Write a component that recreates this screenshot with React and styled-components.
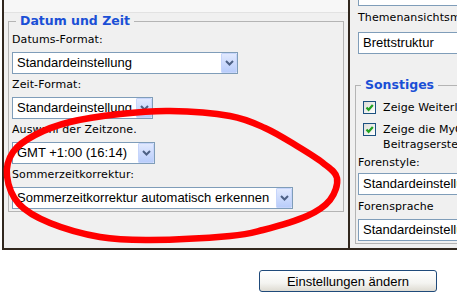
import styled, { createGlobalStyle } from "styled-components";

const GlobalStyle = createGlobalStyle`
  html, body {
    margin: 0;
    padding: 0;
    background: #fff;
    overflow: hidden;
  }
`;

const Stage = styled.div`
  position: relative;
  width: 457px;
  height: 302px;
  overflow: hidden;
  font-family: "DejaVu Sans", Verdana, sans-serif;
`;

const SettingsTable = styled.div`
  display: flex;
  align-items: stretch;
  width: 692px;
  margin: -59px 0 0 2px;
`;

const LeftCell = styled.div`
  width: 346px;
  flex: none;
  box-sizing: border-box;
  display: flex;
  flex-direction: column;
  background: #f0f0f0;
  border-left: 2px solid #31271e;
  border-bottom: 2px solid #31271e;
`;

const TopBand = styled.div`
  height: 72px;
  box-sizing: border-box;
  background: #f7f7f7;
  border-bottom: 1px solid #e2e2e2;
`;

const CellBody = styled.div`
  padding: 0 4px;
`;

const RightCell = styled.div`
  flex: 1;
  box-sizing: border-box;
  background: #f0f0f0;
  border-left: 2px solid #31271e;
  border-bottom: 2px solid #31271e;
  padding: 4px 0 4px 5px;
`;

const Group = styled.fieldset`
  width: ${(p) => p.$w}px;
  box-sizing: border-box;
  margin: 0 0 ${(p) => p.$mb || 0}px 0;
  padding: 0 ${(p) => p.$px}px 2px;
  border: 1px solid ${(p) => (p.$bare ? "transparent" : "#b4b4b4")};
  min-inline-size: 0;
`;

const GroupTitle = styled.legend`
  margin-left: ${(p) => p.$ml}px;
  padding: 0 4px;
  font-family: "DejaVu Sans", Verdana, sans-serif;
  font-weight: bold;
  font-size: 12.5px;
  line-height: 16px;
  color: #1a4fd6;
  visibility: ${(p) => (p.$hidden ? "hidden" : "visible")};
`;

const Label = styled.div`
  margin: ${(p) => p.$mt ?? 3}px 0 ${(p) => p.$mb ?? 4}px;
  font-size: 11px;
  line-height: 16px;
  letter-spacing: 0.1px;
  color: #000;
  white-space: nowrap;
`;

const SelectBox = styled.div`
  width: ${(p) => p.$w}px;
  height: 22px;
  box-sizing: border-box;
  display: flex;
  background: #fff;
  border: 1px solid #7f9db9;
`;

const SelectText = styled.span`
  flex: 1;
  padding-left: 4px;
  font-family: "Liberation Sans", Arial, sans-serif;
  font-size: 13px;
  line-height: 20px;
  color: #000;
  white-space: nowrap;
  overflow: hidden;
`;

const DropButton = styled.span`
  width: 16px;
  flex: none;
  box-sizing: border-box;
  display: flex;
  align-items: center;
  justify-content: center;
  border: 1px solid #c6d5fb;
  border-radius: 1px;
  background: linear-gradient(#e1e9fe, #b9cdfb);
`;

const CheckRow = styled.div`
  display: flex;
  align-items: flex-start;
  margin-top: 7px;
  font-size: 11px;
  line-height: 15px;
  letter-spacing: 0.1px;
  white-space: nowrap;
`;

const CheckBox = styled.span`
  width: 13px;
  height: 13px;
  flex: none;
  box-sizing: border-box;
  margin: 1px 7px 0 5px;
  display: flex;
  align-items: center;
  justify-content: center;
  border: 1px solid #1c5180;
  background: linear-gradient(135deg, #dcdcd7, #fff);
`;

const Footer = styled.div`
  width: 692px;
  margin-left: 2px;
  padding-top: 20px;
  display: flex;
  justify-content: center;
`;

const SubmitButton = styled.button`
  width: 178px;
  height: 22px;
  padding: 0;
  border: 1px solid #1f4a7a;
  border-radius: 3px;
  background: linear-gradient(#ffffff, #f4f4f1 60%, #dedbd2);
  font-family: "Liberation Sans", Arial, sans-serif;
  font-size: 13px;
  color: #000;
`;

const Scribble = styled.svg`
  position: absolute;
  top: 0;
  left: 0;
  pointer-events: none;
`;

const Chevron = () => (
  <svg width="9" height="6" viewBox="0 0 9 6">
    <path d="M1 1 L4.5 4.5 L8 1" fill="none" stroke="#4d6185" strokeWidth="2" />
  </svg>
);

const Tick = () => (
  <svg width="11" height="11" viewBox="0 0 11 11">
    <path d="M2.5 5.5 L4.6 7.8 L8.8 3" fill="none" stroke="#21a121" strokeWidth="2.2" />
  </svg>
);

const Select = ({ w, children, arrow = true }) => (
  <SelectBox $w={w}>
    <SelectText>{children}</SelectText>
    {arrow && (
      <DropButton>
        <Chevron />
      </DropButton>
    )}
  </SelectBox>
);

// hand drawn red ring, smoothed through a few points
const ring = [
  [7, 176], [13, 152], [35, 135], [70, 122], [120, 114], [170, 111],
  [230, 116], [265, 128], [297, 146], [323, 163], [337, 178], [330, 200],
  [307, 216], [263, 230], [230, 236], [150, 240], [100, 237], [50, 223], [19, 204],
];

const smoothPath = (pts) => {
  const n = pts.length;
  let d = `M${pts[0][0]},${pts[0][1]}`;
  for (let i = 0; i < n; i++) {
    const p0 = pts[(i - 1 + n) % n];
    const p1 = pts[i];
    const p2 = pts[(i + 1) % n];
    const p3 = pts[(i + 2) % n];
    const c1 = [p1[0] + (p2[0] - p0[0]) / 6, p1[1] + (p2[1] - p0[1]) / 6];
    const c2 = [p2[0] - (p3[0] - p1[0]) / 6, p2[1] - (p3[1] - p1[1]) / 6];
    d += ` C${c1} ${c2} ${p2}`;
  }
  return d + "Z";
};

export default function App() {
  return (
    <Stage>
      <GlobalStyle />
      <SettingsTable>
        <LeftCell>
          <TopBand />
          <CellBody>
            <Group $w={336} $px={3}>
              <GroupTitle $ml={4}>Datum und Zeit</GroupTitle>
              <Label>Datums-Format:</Label>
              <Select w={226}>Standardeinstellung</Select>
              <Label>Zeit-Format:</Label>
              <Select w={141}>Standardeinstellung</Select>
              <Label>Auswahl der Zeitzone.</Label>
              <Select w={143}>GMT +1:00 (16:14)</Select>
              <Label>Sommerzeitkorrektur:</Label>
              <Select w={281}>Sommerzeitkorrektur automatisch erkennen</Select>
            </Group>
          </CellBody>
        </LeftCell>
        <RightCell>
          <Group $w={330} $px={2} $mb={20} $bare>
            <GroupTitle $ml={3} $hidden>Ansicht</GroupTitle>
            <Label>Themenansicht:</Label>
            <Select w={300} arrow={false}>Standardeinstellung</Select>
            <Label $mt={4} $mb={6}>Themenansichtsmodus:</Label>
            <Select w={300} arrow={false}>Brettstruktur</Select>
          </Group>
          <Group $w={330} $px={2}>
            <GroupTitle $ml={3}>Sonstiges</GroupTitle>
            <CheckRow>
              <CheckBox><Tick /></CheckBox>
              <span>Zeige Weiterleitungsseiten</span>
            </CheckRow>
            <CheckRow>
              <CheckBox><Tick /></CheckBox>
              <span>
                Zeige die MyCode-Formatierungsoptionen bei der
                <br />
                Beitragserstellung
              </span>
            </CheckRow>
            <Label $mt={3} $mb={2}>Forenstyle:</Label>
            <Select w={300} arrow={false}>Standardeinstellung</Select>
            <Label $mt={4} $mb={4}>Forensprache</Label>
            <Select w={300} arrow={false}>Standardeinstellung</Select>
          </Group>
        </RightCell>
      </SettingsTable>
      <Footer>
        <SubmitButton>Einstellungen ändern</SubmitButton>
      </Footer>
      <Scribble width="457" height="302" viewBox="0 0 457 302">
        <path d={smoothPath(ring)} fill="none" stroke="#ff0000" strokeWidth="6.5" strokeLinejoin="round" />
      </Scribble>
    </Stage>
  );
}
